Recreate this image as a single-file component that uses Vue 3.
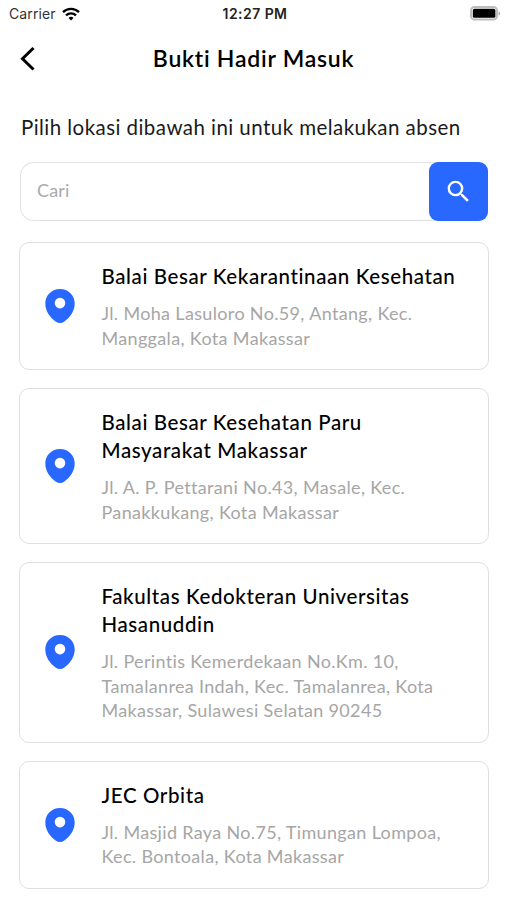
<template>
  <div class="screen">
    <div class="status-bar">
      <div class="carrier">
        <span>Carrier</span>
        <svg class="wifi" viewBox="0 0 18 14" fill="none" stroke="#000" stroke-width="2.3">
          <path d="M1 5.1a11.5 11.5 0 0 1 16 0" />
          <path d="M4 8.3a7.2 7.2 0 0 1 10 0" />
          <path d="M6.5 10.9a3.6 3.6 0 0 1 5 0L9 13.4z" fill="#000" stroke="none" />
        </svg>
      </div>
      <span class="clock">12:27 PM</span>
      <svg class="battery" viewBox="0 0 31 15">
        <rect x="1" y="1" width="26" height="12.6" rx="3.6" fill="#fff" stroke="#bdbdbd" stroke-width="2" />
        <rect x="2.8" y="2.8" width="22.6" height="9" rx="1.6" fill="#000" />
        <path d="M28.6 5.2c2.2 1 2.2 3.4 0 4.4z" fill="#aaa" />
      </svg>
    </div>

    <header class="header">
      <button class="btn-back" aria-label="Kembali">
        <svg viewBox="0 0 16 26" fill="none" stroke="#000" stroke-width="3">
          <path d="M13.5 2L2.5 12.7l11 10.8" />
        </svg>
      </button>
      <h1 class="page-title">Bukti Hadir Masuk</h1>
    </header>

    <p class="intro">Pilih lokasi dibawah ini untuk melakukan absen</p>

    <div class="search">
      <input v-model="searchQuery" type="text" class="search-input" placeholder="Cari" />
      <button class="btn-search" aria-label="Cari">
        <svg viewBox="0 0 24 24" fill="#fff">
          <path d="M15.5 14h-.79l-.28-.27A6.471 6.471 0 0 0 16 9.5 6.5 6.5 0 1 0 9.5 16c1.61 0 3.09-.59 4.23-1.57l.27.28v.79l5 4.99L20.49 19l-4.99-5zm-6 0C7.01 14 5 11.99 5 9.5S7.01 5 9.5 5 14 7.01 14 9.5 11.99 14 9.5 14z" />
        </svg>
      </button>
    </div>

    <div class="location-list">
      <div v-for="location in filteredLocations" :key="location.name" class="location-card">
        <svg class="pin" viewBox="0 0 30 34">
          <path
            fill="#2868ff"
            fill-rule="evenodd"
            d="M15 0C6.7 0 .3 6.4.3 14.4c0 7.3 4.4 13.7 10.3 18 2.8 2 6 2 8.8 0 5.9-4.3 10.3-10.7 10.3-18C29.7 6.4 23.3 0 15 0zm0 8.8a5.3 5.3 0 1 1 0 10.6 5.3 5.3 0 0 1 0-10.6z"
          />
        </svg>
        <div class="location-info">
          <h2 class="location-name">{{ location.name }}</h2>
          <p class="location-address">{{ location.address }}</p>
        </div>
      </div>
    </div>
  </div>
</template>

<script setup>
import { ref, computed } from 'vue'

const searchQuery = ref('')

const locations = [
  {
    name: 'Balai Besar Kekarantinaan Kesehatan',
    address: 'Jl. Moha Lasuloro No.59, Antang, Kec.\nManggala, Kota Makassar'
  },
  {
    name: 'Balai Besar Kesehatan Paru\nMasyarakat Makassar',
    address: 'Jl. A. P. Pettarani No.43, Masale, Kec.\nPanakkukang, Kota Makassar'
  },
  {
    name: 'Fakultas Kedokteran Universitas\nHasanuddin',
    address: 'Jl. Perintis Kemerdekaan No.Km. 10,\nTamalanrea Indah, Kec. Tamalanrea, Kota\nMakassar, Sulawesi Selatan 90245'
  },
  {
    name: 'JEC Orbita',
    address: 'Jl. Masjid Raya No.75, Timungan Lompoa,\nKec. Bontoala, Kota Makassar'
  }
]

const filteredLocations = computed(() => {
  const query = searchQuery.value.toLowerCase()
  return locations.filter(l => l.name.toLowerCase().includes(query))
})
</script>

<style>
body {
  margin: 0;
  background: #fff;
}
</style>

<style scoped>
.screen {
  box-sizing: border-box;
  width: 100%;
  height: 900px;
  overflow: hidden;
  background: #fff;
  color: #1a1a1a;
  font-family: Lato, "Open Sans", sans-serif;
}

.status-bar {
  display: grid;
  grid-template-columns: 1fr auto 1fr;
  align-items: center;
  height: 27px;
  padding: 0 6px 0 9px;
  font-family: Inter, "Liberation Sans", sans-serif;
  font-size: 14px;
}

.carrier {
  display: flex;
  align-items: center;
  gap: 6px;
  color: #333;
  letter-spacing: 0.1px;
}

.wifi {
  width: 18px;
  height: 14px;
}

.clock {
  font-weight: 600;
  letter-spacing: 0.45px;
  color: #222;
}

.battery {
  width: 31px;
  height: 15px;
  justify-self: end;
}

.header {
  display: grid;
  grid-template-columns: 40px 1fr 40px;
  align-items: center;
  height: 64px;
  padding: 0 20px;
}

.btn-back {
  display: flex;
  padding: 0;
  border: none;
  background: transparent;
  cursor: pointer;
}

.btn-back svg {
  width: 16px;
  height: 26px;
}

.page-title {
  margin: 0 0 2px;
  text-align: center;
  font-size: 23px;
  line-height: 30px;
  font-weight: 600;
  letter-spacing: 0.75px;
  color: #000;
}

.intro {
  margin: 22px 20px 0 21px;
  font-size: 20.5px;
  line-height: 28px;
  letter-spacing: 0.45px;
  white-space: nowrap;
}

.search {
  display: flex;
  margin: 21px 19px 0 20px;
  height: 59px;
}

.search-input {
  box-sizing: border-box;
  flex: 1;
  min-width: 0;
  margin-right: -12px;
  padding: 0 16px 3px;
  border: 1px solid #e2e2e2;
  border-radius: 14px 0 0 14px;
  border-right: none;
  background: #fff;
  font-family: inherit;
  font-size: 18px;
  letter-spacing: 0.2px;
  outline: none;
}

.search-input::placeholder {
  color: #aaa;
  opacity: 1;
}

.btn-search {
  position: relative;
  display: flex;
  align-items: center;
  justify-content: center;
  width: 59px;
  padding: 0;
  border: none;
  border-radius: 9px;
  background: #2868ff;
  cursor: pointer;
}

.btn-search svg {
  width: 29px;
  height: 29px;
}

.location-list {
  display: flex;
  flex-direction: column;
  gap: 18px;
  padding: 21px 18px 0 19px;
}

.location-card {
  display: flex;
  align-items: center;
  gap: 27px;
  padding: 19px 12px 19px 24.5px;
  border: 1px solid #dfdfdf;
  border-radius: 10px;
}

.pin {
  flex: none;
  width: 30px;
  height: 34px;
}

.location-name {
  margin: 0 0 11px;
  font-size: 20.5px;
  line-height: 28px;
  font-weight: 500;
  letter-spacing: 0.6px;
  color: #000;
  white-space: pre;
}

.location-address {
  margin: 0;
  font-size: 18px;
  line-height: 24.5px;
  letter-spacing: 0.34px;
  color: #a6a6a6;
  white-space: pre;
}
</style>
